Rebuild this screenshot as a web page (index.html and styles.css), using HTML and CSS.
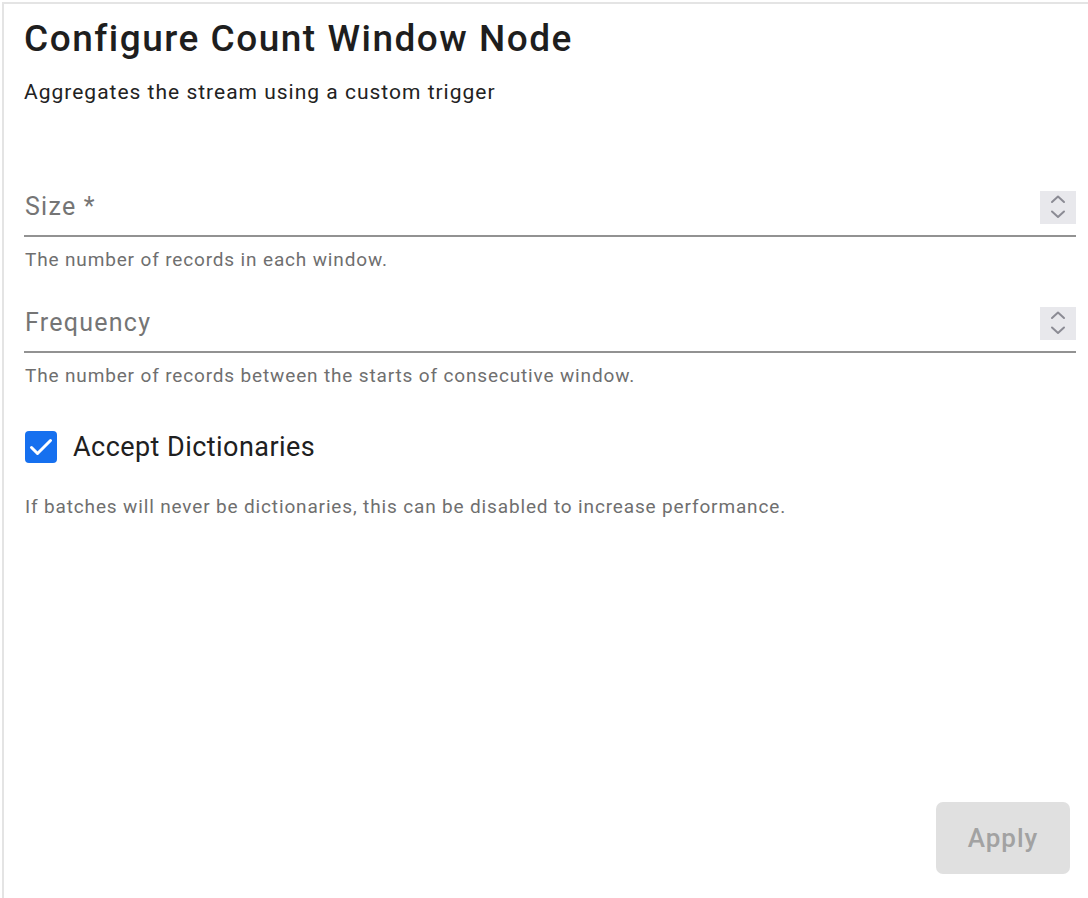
FILE: index.html
```html
<!DOCTYPE html>
<html lang="en">
<head>
<meta charset="utf-8">
<title>Configure Count Window Node</title>
<link rel="stylesheet" href="styles.css">
</head>
<body>
<div class="panel">
  <h1 class="title">Configure Count Window Node</h1>
  <p class="subtitle">Aggregates the stream using a custom trigger</p>

  <div class="fields">
    <div class="field">
      <div class="input-row">
        <span class="label">Size *</span>
        <span class="spinner">
          <svg width="16" height="26" viewBox="0 0 16 26"><path d="M2 8 L8 2.5 L14 8" fill="none" stroke="#8b8b94" stroke-width="2" stroke-linecap="round" stroke-linejoin="round"/><path d="M2 17.5 L8 23 L14 17.5" fill="none" stroke="#8b8b94" stroke-width="2" stroke-linecap="round" stroke-linejoin="round"/></svg>
        </span>
      </div>
      <p class="helper">The number of records in each window.</p>
    </div>

    <div class="field">
      <div class="input-row">
        <span class="label">Frequency</span>
        <span class="spinner">
          <svg width="16" height="26" viewBox="0 0 16 26"><path d="M2 8 L8 2.5 L14 8" fill="none" stroke="#8b8b94" stroke-width="2" stroke-linecap="round" stroke-linejoin="round"/><path d="M2 17.5 L8 23 L14 17.5" fill="none" stroke="#8b8b94" stroke-width="2" stroke-linecap="round" stroke-linejoin="round"/></svg>
        </span>
      </div>
      <p class="helper">The number of records between the starts of consecutive window.</p>
    </div>

    <div class="check-row">
      <span class="checkbox">
        <svg width="32" height="32" viewBox="0 0 32 32"><path d="M6.5 16.5 L12.5 22.5 L25.5 9.5" fill="none" stroke="#fff" stroke-width="3" stroke-linecap="round" stroke-linejoin="round"/></svg>
      </span>
      <span class="check-label">Accept Dictionaries</span>
    </div>
    <p class="helper helper-check">If batches will never be dictionaries, this can be disabled to increase performance.</p>
  </div>

  <div class="actions">
    <button class="apply" disabled>Apply</button>
  </div>
</div>
</body>
</html>
```

FILE: styles.css
```css
html, body {
  margin: 0;
  padding: 0;
  background: #ffffff;
}

body {
  font-family: Roboto, "Liberation Sans", Arial, sans-serif;
  color: #202020;
}

.panel {
  box-sizing: border-box;
  margin: 2px 0 0 2px;
  height: 896px;
  border-top: 2px solid #e4e4e4;
  border-left: 2px solid #e4e4e4;
  padding: 15px 12px 24px 20px;
  display: flex;
  flex-direction: column;
}

.title {
  margin: 0;
  font-size: 37px;
  line-height: 40px;
  font-weight: 500;
  color: #1e1e1e;
  letter-spacing: 1.5px;
}

.subtitle {
  margin: 21px 0 0;
  font-size: 21px;
  line-height: 24px;
  font-weight: 400;
  color: #222;
  letter-spacing: 1px;
}

.fields {
  margin-top: 85px;
  display: flex;
  flex-direction: column;
}

.field {
  display: flex;
  flex-direction: column;
}

.field + .field {
  margin-top: 34px;
}

.input-row {
  display: flex;
  align-items: center;
  justify-content: space-between;
  height: 36px;
  padding-bottom: 10px;
  border-bottom: 2px solid #929292;
}

.label {
  padding-left: 1px;
  font-size: 25px;
  line-height: 30px;
  color: #757575;
  letter-spacing: 1.25px;
}

.spinner {
  width: 36px;
  height: 33px;
  background: #e8e8ec;
  display: flex;
  align-items: center;
  justify-content: center;
}

.spinner svg {
  display: block;
}

.helper {
  margin: 12px 0 0 1px;
  font-size: 19px;
  line-height: 22px;
  color: #6f6f6f;
  letter-spacing: 0.85px;
}

.check-row {
  margin-top: 44px;
  display: flex;
  align-items: center;
  padding-left: 1px;
}

.checkbox {
  width: 32px;
  height: 32px;
  border-radius: 4px;
  background: #1670ef;
  display: flex;
  align-items: center;
  justify-content: center;
}

.checkbox svg {
  display: block;
}

.check-label {
  margin-left: 16px;
  font-size: 27px;
  line-height: 32px;
  color: #202020;
  letter-spacing: 0.45px;
}

.helper-check {
  margin-top: 33px;
}

.actions {
  margin-top: auto;
  display: flex;
  justify-content: flex-end;
  padding-right: 6px;
}

.apply {
  width: 134px;
  height: 72px;
  border: none;
  border-radius: 7px;
  background: #e0e0e0;
  color: #a2a2a2;
  font-family: Roboto, "Liberation Sans", Arial, sans-serif;
  font-size: 26px;
  font-weight: 500;
  letter-spacing: 1px;
  cursor: default;
}
```
